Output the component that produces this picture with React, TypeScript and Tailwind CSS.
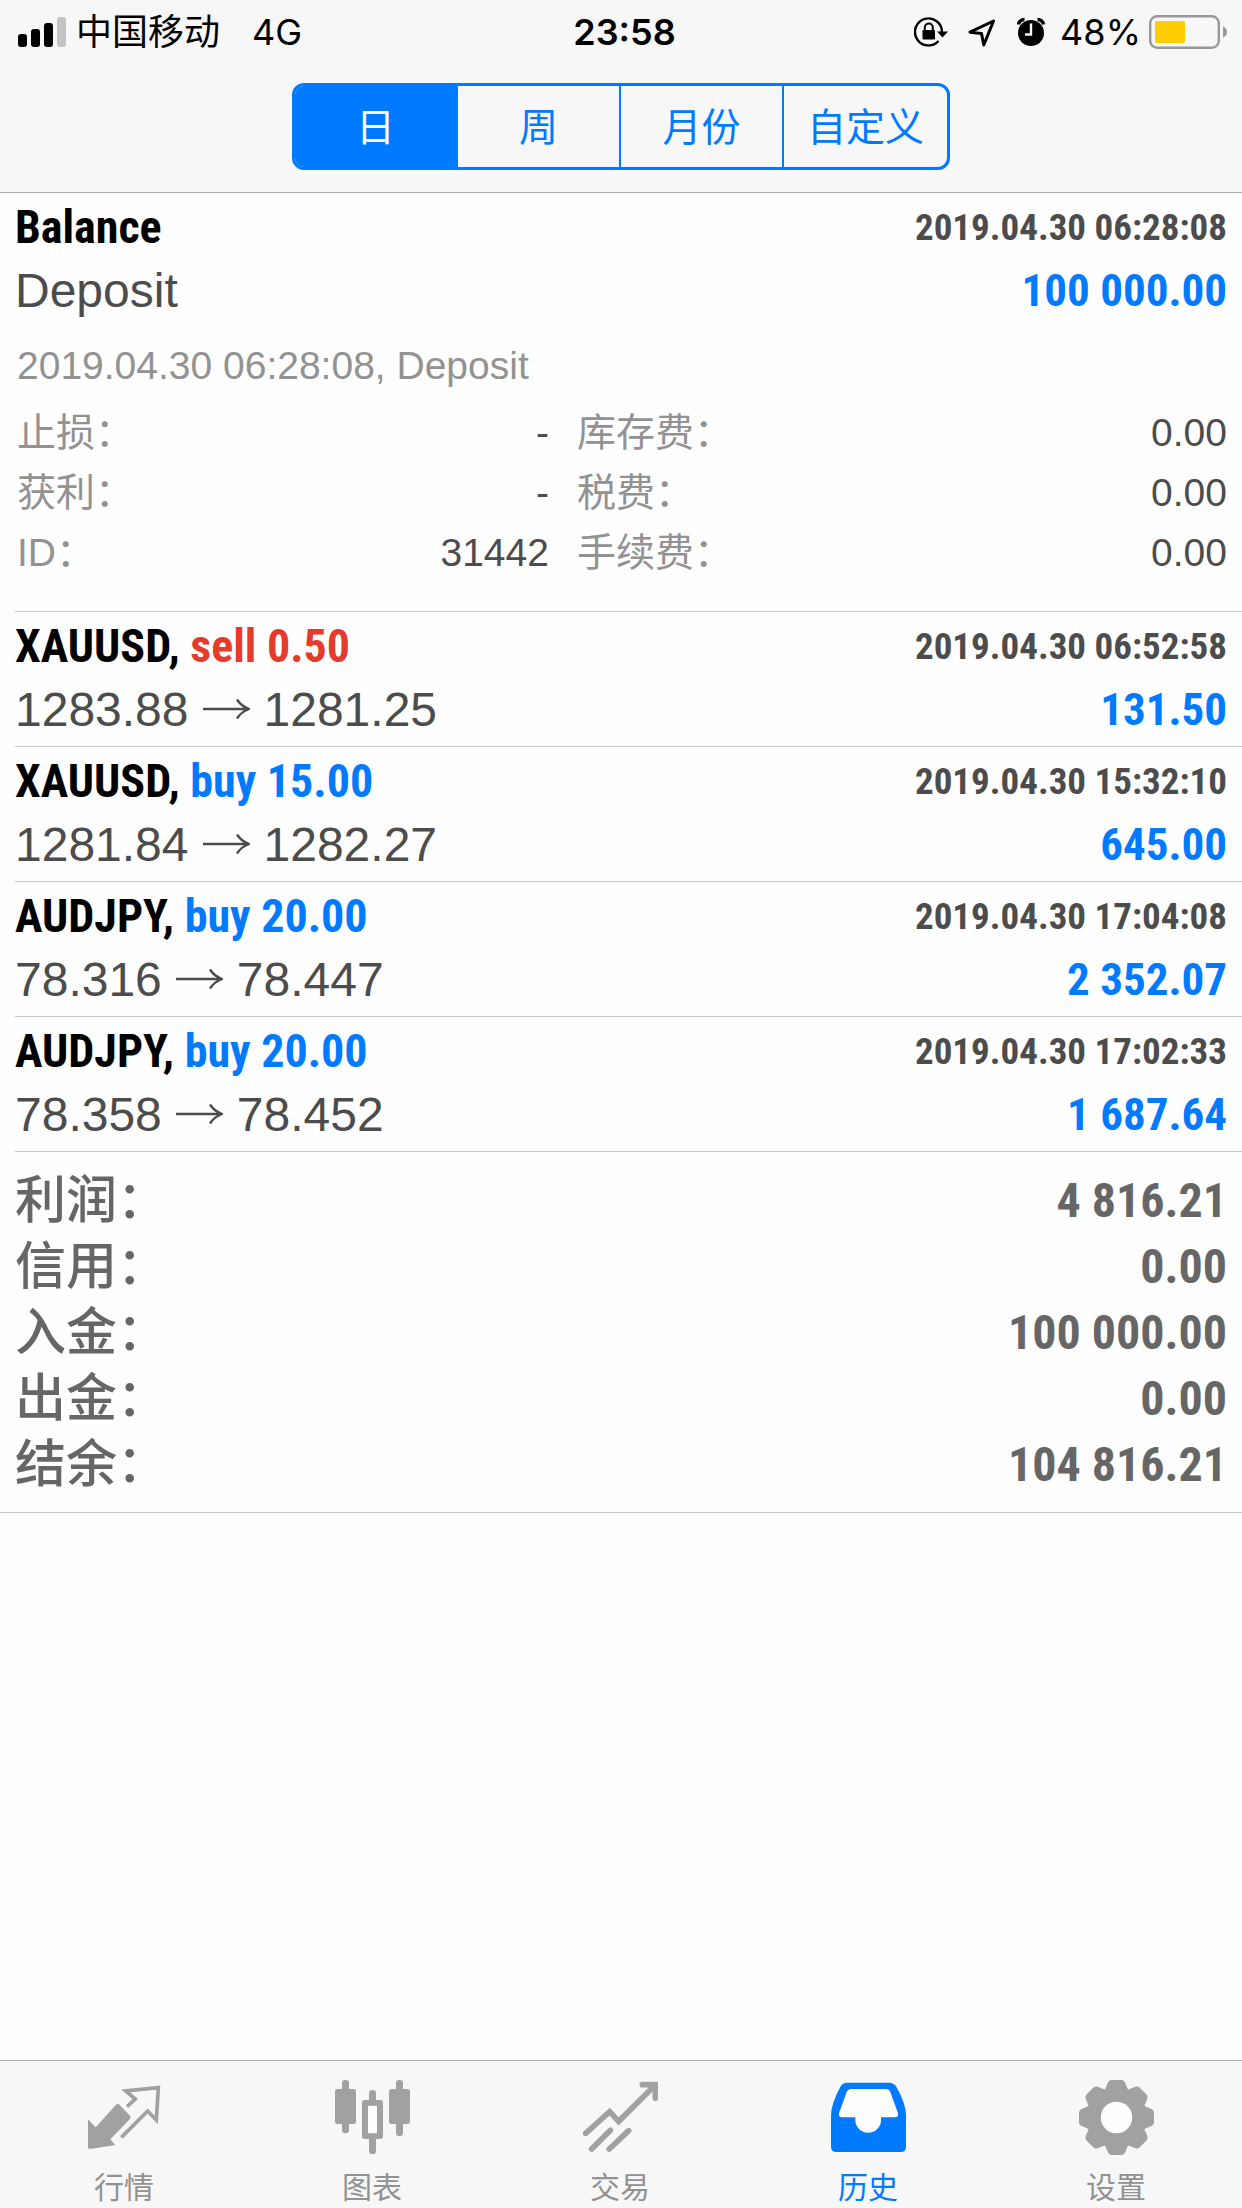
import { useState } from 'react';
import type { ReactNode } from 'react';

const sans = "font-['Liberation_Sans','Noto_Sans_CJK_SC',sans-serif]";
const narrow = "font-['Roboto_Condensed','Liberation_Sans',sans-serif]";
const system = "font-['Inter','Noto_Sans_CJK_SC',sans-serif]";

const periodos = ['日', '周', '月份', '自定义'];

const operaciones = [
  { simbolo: 'XAUUSD', tipo: 'sell', volumen: '0.50', desde: '1283.88', hasta: '1281.25', fecha: '2019.04.30 06:52:58', importe: '131.50' },
  { simbolo: 'XAUUSD', tipo: 'buy', volumen: '15.00', desde: '1281.84', hasta: '1282.27', fecha: '2019.04.30 15:32:10', importe: '645.00' },
  { simbolo: 'AUDJPY', tipo: 'buy', volumen: '20.00', desde: '78.316', hasta: '78.447', fecha: '2019.04.30 17:04:08', importe: '2 352.07' },
  { simbolo: 'AUDJPY', tipo: 'buy', volumen: '20.00', desde: '78.358', hasta: '78.452', fecha: '2019.04.30 17:02:33', importe: '1 687.64' },
];

const detalles = [
  ['止损：', '-', '库存费：', '0.00'],
  ['获利：', '-', '税费：', '0.00'],
  ['ID：', '31442', '手续费：', '0.00'],
];

const totales = [
  ['利润：', '4 816.21'],
  ['信用：', '0.00'],
  ['入金：', '100 000.00'],
  ['出金：', '0.00'],
  ['结余：', '104 816.21'],
];

// Barra de estado del teléfono
const StatusBar = () => (
  <div className={`grid h-16 grid-cols-[1fr_auto_1fr] items-center pl-[18px] pr-[15px] text-[36px] leading-none text-black ${system}`}>
    <div className="flex items-center">
      <svg className="h-[30px] w-12" viewBox="0 0 48 30" aria-hidden="true">
        <rect x="0" y="17" width="9" height="13" rx="3" />
        <rect x="13" y="12" width="9" height="18" rx="3" />
        <rect x="26" y="6" width="9" height="24" rx="3" />
        <rect x="39" y="0" width="9" height="30" rx="3" fill="#c3c3c3" />
      </svg>
      <span className="ml-[10px]">中国移动</span>
      <span className="ml-8">4G</span>
    </div>
    <span className="pl-1 font-semibold">23:58</span>
    <div className="flex items-center justify-end">
      <svg className="h-[30px] w-[34px]" viewBox="0 0 34 30" aria-hidden="true">
        <path d="M28 15A13.500 13.500 0 1 0 24.500 24" fill="none" stroke="#000" strokeWidth="2.400" />
        <path d="M23 14.500h11L28.500 20.500z" />
        <rect x="8.500" y="13" width="12.500" height="9.500" rx="1.200" />
        <path d="M10.800 13.500v-3a4 4 0 0 1 8 0v3" fill="none" stroke="#000" strokeWidth="2" />
      </svg>
      <svg className="ml-5 h-[30px] w-7" viewBox="0 0 28 30" aria-hidden="true">
        <path d="M25.500 4L2 15.200 13.500 16.500 15.800 28z" fill="none" stroke="#000" strokeWidth="3" strokeLinejoin="round" />
      </svg>
      <svg className="ml-5 h-[30px] w-[30px]" viewBox="0 0 30 30" aria-hidden="true">
        <circle cx="15" cy="16" r="13" />
        <path d="M2.500 7.500A6 6 0 0 1 8.500 2.500M27.500 7.500A6 6 0 0 0 21.500 2.500" fill="none" stroke="#000" strokeWidth="3.500" />
        <path d="M15 6.500V17.500H9" fill="none" stroke="#f7f7f7" strokeWidth="2.400" />
      </svg>
      <span className="ml-[14px]">48%</span>
      <svg className="ml-2 h-[34px] w-[78px]" viewBox="0 0 78 34" aria-hidden="true">
        <rect x="1.200" y="1.200" width="68.600" height="31.600" rx="7" fill="none" stroke="#98989a" strokeWidth="2.400" />
        <rect x="6" y="6" width="30" height="22" rx="2" fill="#ffcc00" />
        <path d="M74 11.500Q78 13 78 17Q78 21 74 22.500z" fill="#98989a" />
      </svg>
    </div>
  </div>
);

const Fecha = ({ children }: { children: ReactNode }) => (
  <time className={`text-[37px] font-bold text-[#4c4c4c] ${narrow}`}>{children}</time>
);

const Importe = ({ children }: { children: ReactNode }) => (
  <span className={`text-[45px] font-bold text-[#007aff] ${narrow}`}>{children}</span>
);

const Linea = ({ children }: { children: ReactNode }) => (
  <div className="flex items-center justify-between leading-[63px]">{children}</div>
);

const Flecha = () => (
  <svg className="h-6 w-[47px]" viewBox="0 0 47 24" fill="none" stroke="currentColor" strokeWidth="2.400" aria-label="→">
    <path d="M0 11H45M34 1.500Q38 8 46 11Q38 14 34 20.500" />
  </svg>
);

const IconoCotizaciones = () => (
  <svg className="size-[75px]" viewBox="108 90 225 225" fill="currentColor" aria-hidden="true">
    <path d="M111 208L134 232 195 164Q199 160 204 163L237 197Q240 202 237 207L178 268 193 285 117 297Q111 297 111 291z" />
    <path d="M228 170L253 147 224 123 322 113 316 210 290 183 211 262" fill="none" stroke="currentColor" strokeWidth="11" />
  </svg>
);

const IconoGraficos = () => (
  <svg className="size-[75px]" viewBox="855 90 225 225" fill="currentColor" aria-hidden="true">
    <rect x="855" y="117" width="63" height="105" rx="8" />
    <rect x="876" y="90" width="21" height="160" rx="10" />
    <rect x="936" y="150" width="63" height="117" rx="8" />
    <rect x="957" y="120" width="21" height="192" rx="10" />
    <rect x="954" y="167" width="27" height="83" rx="3" fill="#fefefe" />
    <rect x="1017" y="117" width="63" height="105" rx="8" />
    <rect x="1038" y="90" width="21" height="168" rx="10" />
  </svg>
);

const IconoOperar = () => (
  <svg className="size-[75px]" viewBox="95 90 225 225" fill="none" stroke="currentColor" strokeWidth="17" strokeLinecap="round" aria-hidden="true">
    <path d="M103 250L175 185 202 214 308 109" />
    <path d="M273 104H312V145" />
    <path d="M121 297L177 241M174 297L232 242" />
  </svg>
);

const IconoHistorial = () => (
  <svg className="size-[75px]" viewBox="840 90 225 225" fill="currentColor" aria-hidden="true">
    <path d="M888 98H1014Q1028 98 1035 109Q1050 134 1058 158Q1065 178 1065 195V290Q1065 306 1049 306H856Q840 306 840 290V195Q840 178 847 158Q855 134 869 109Q875 98 888 98z" />
    <path d="M902 117H1003Q1014 117 1018 126L1041 190Q1043 202 1033 202H990V210A38.500 38.500 0 0 1 913 210V202H873Q862 202 864 190L887 126Q891 117 902 117z" fill="#fefefe" />
  </svg>
);

const IconoAjustes = () => (
  <svg className="size-[75px]" viewBox="-112 -112 224 224" fill="currentColor" aria-hidden="true">
    <circle r="88" />
    {[0, 45, 90, 135, 180, 225, 270, 315].map((angulo) => (
      <path key={angulo} d="M-38 -76Q-32 -88 -27 -101Q-23 -112 -14 -112H14Q23 -112 27 -101Q32 -88 38 -76z" transform={`rotate(${angulo})`} />
    ))}
    <circle r="47" fill="#fefefe" />
  </svg>
);

const pestanas = [
  { nombre: '行情', Icono: IconoCotizaciones },
  { nombre: '图表', Icono: IconoGraficos },
  { nombre: '交易', Icono: IconoOperar },
  { nombre: '历史', Icono: IconoHistorial },
  { nombre: '设置', Icono: IconoAjustes },
];

export default function App() {
  const [periodo, setPeriodo] = useState('日');
  const [pestana, setPestana] = useState('历史');

  return (
    <div className={`flex min-h-screen flex-col bg-[#fefefe] ${sans}`}>
      <header className="border-b border-[#adadb0] bg-[#f7f7f7]">
        <StatusBar />
        <div className="flex justify-center pb-[22px] pt-[19px]">
          <div className="grid h-[87px] w-[53%] grid-cols-4 divide-x-2 divide-[#007aff] overflow-hidden rounded-xl border-3 border-[#007aff]">
            {periodos.map((p) => (
              <button
                key={p}
                onClick={() => setPeriodo(p)}
                aria-pressed={p === periodo}
                className={p === periodo ? 'bg-[#007aff] pt-[3px] text-[39px] text-white' : 'pt-[3px] text-[39px] text-[#007aff]'}
              >
                {p}
              </button>
            ))}
          </div>
        </div>
      </header>

      <main className="flex-1">
        <ul className="pl-[15px]">
          <li className="border-b border-[#c8c7cc] pb-7 pr-[15px] pt-[3px]">
            <Linea>
              <h2 className={`text-[46px] font-bold text-black ${narrow}`}>Balance</h2>
              <Fecha>2019.04.30 06:28:08</Fecha>
            </Linea>
            <Linea>
              <span className="text-[48px] text-[#4c4c4c]">Deposit</span>
              <Importe>100 000.00</Importe>
            </Linea>
            <p className="pl-[2px] pt-[14px] text-[39px] leading-[60px] text-[#929292]">2019.04.30 06:28:08, Deposit</p>
            <div className="pl-[2px] pt-[7px] text-[39px] leading-[60px] text-[#4c4c4c]">
              {detalles.map(([etiqueta, valor, etiqueta2, valor2]) => (
                <dl key={etiqueta} className="grid grid-cols-[9fr_11fr] gap-x-7">
                  <div className="flex justify-between">
                    <dt className="text-[#929292]">{etiqueta}</dt>
                    <dd>{valor}</dd>
                  </div>
                  <div className="flex justify-between">
                    <dt className="text-[#929292]">{etiqueta2}</dt>
                    <dd>{valor2}</dd>
                  </div>
                </dl>
              ))}
            </div>
          </li>

          {operaciones.map((op) => (
            <li key={op.fecha} className="border-b border-[#c8c7cc] pb-[5px] pr-[15px] pt-[3px]">
              <Linea>
                <h2 className={`text-[46px] font-bold text-black ${narrow}`}>
                  {op.simbolo},{' '}
                  <span className={op.tipo === 'sell' ? 'text-[#e53b2c]' : 'text-[#007aff]'}>
                    {op.tipo} {op.volumen}
                  </span>
                </h2>
                <Fecha>{op.fecha}</Fecha>
              </Linea>
              <Linea>
                <div className="flex items-center gap-[14px] text-[48px] text-[#4c4c4c]">
                  <span>{op.desde}</span>
                  <Flecha />
                  <span>{op.hasta}</span>
                </div>
                <Importe>{op.importe}</Importe>
              </Linea>
            </li>
          ))}
        </ul>

        <dl className="border-b border-[#c8c7cc] px-[15px] pb-[14px] pt-4 text-[#666666]">
          {totales.map(([nombre, valor]) => (
            <div key={nombre} className="flex items-center justify-between leading-[66px]">
              <dt className="text-[51px] font-medium">{nombre}</dt>
              <dd className={`text-[48px] font-bold ${narrow}`}>{valor}</dd>
            </div>
          ))}
        </dl>
      </main>

      <nav className="grid grid-cols-5 border-t border-[#adadb0] bg-[#f7f7f7] pb-[2px] pr-[2px] pt-[19px]">
        {pestanas.map(({ nombre, Icono }) => (
          <button
            key={nombre}
            onClick={() => setPestana(nombre)}
            className={nombre === pestana ? 'flex flex-col items-center gap-[15px] text-[#007aff]' : 'flex flex-col items-center gap-[15px] text-[#a1a1a1]'}
          >
            <Icono />
            <span className={nombre === pestana ? 'text-[30px] leading-9' : 'text-[30px] leading-9 text-[#929292]'}>{nombre}</span>
          </button>
        ))}
      </nav>
    </div>
  );
}
